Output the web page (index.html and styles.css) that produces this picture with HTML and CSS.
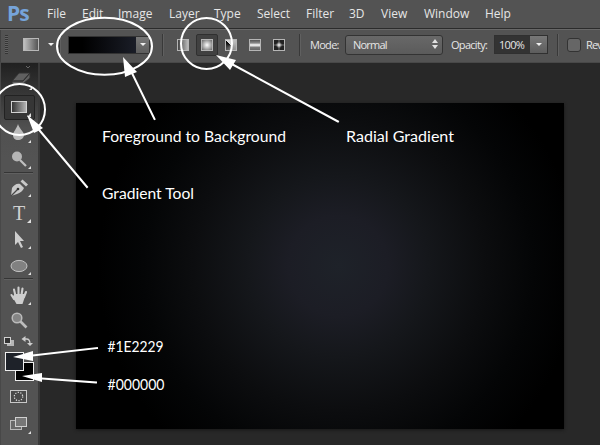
FILE: index.html
```html
<!DOCTYPE html>
<html lang="en">
<head>
<meta charset="utf-8">
<title>Gradient tool</title>
<link rel="stylesheet" href="styles.css">
</head>
<body>
<div class="app">
  <nav class="menubar">
    <span class="logo">Ps</span>
    <span class="m">File</span><span class="m">Edit</span><span class="m">Image</span><span class="m">Layer</span><span class="m">Type</span><span class="m">Select</span><span class="m">Filter</span><span class="m">3D</span><span class="m">View</span><span class="m">Window</span><span class="m">Help</span>
  </nav>
  <div class="options">
    <i class="grip"></i>
    <i class="preview"></i>
    <i class="caret preset-caret"></i>
    <i class="rule rule-a"></i>
    <div class="ramp"><i class="ramp-fill"></i><span class="drop"><i class="caret"></i></span></div>
    <i class="rule rule-b"></i>
    <div class="kinds">
      <span class="kind"><i class="g linear"></i></span>
      <span class="kind on"><i class="g radial"></i></span>
      <span class="kind"><i class="g angle"></i></span>
      <span class="kind"><i class="g reflected"></i></span>
      <span class="kind"><i class="g diamond"></i></span>
    </div>
    <i class="rule rule-c"></i>
    <span class="label mode">Mode:</span>
    <div class="select"><span>Normal</span><svg width="6" height="10" viewBox="0 0 6 10"><path d="M0 4 3 0 6 4ZM0 6 3 10 6 6Z" fill="#e2e2e2"/></svg></div>
    <span class="label opacity">Opacity:</span>
    <div class="number"><span>100%</span><span class="drop"><i class="caret"></i></span></div>
    <i class="rule rule-d"></i>
    <i class="check"></i>
    <span class="label reverse">Rev</span>
  </div>
  <div class="work">
    <aside class="tools">
      <div class="tool eraser"><svg width="37" height="29"><path d="M11 18 18 10h11l-7 8ZM11 18v4h10l8-7v-5l-7 8Z" fill="#606060" stroke="#303030"/><path d="M25 3l2 2 2-2" fill="none" stroke="#666"/><path class="corner" d="M31 24v3h-3Z"/></svg></div>
      <div class="tool active"><svg width="37" height="25"><defs><linearGradient id="tg"><stop stop-color="#303030"/><stop offset="1" stop-color="#b8b8b8"/></linearGradient></defs><rect x="10.5" y="6.5" width="15" height="11" fill="url(#tg)" stroke="#d2d2d2"/><path class="corner" d="M30 18v4h-4Z"/></svg></div>
      <div class="tool"><svg width="37" height="26"><path d="M17 4C16 8 12 12 12 15c0 3 2 5 5 5s6-2 6-5c0-3-5-7-6-11Z" fill="#bcbcbc"/><path class="corner" d="M30 20v3h-3Z"/></svg></div>
      <div class="tool"><svg width="37" height="26"><circle cx="16" cy="10.500" r="5" fill="#b5b5b5"/><path d="m19 14 6 6" stroke="#c0c0c0" stroke-width="2.200"/><path class="corner" d="M30 20v3h-3Z"/></svg></div>
      <hr>
      <div class="tool"><svg width="37" height="26"><path d="m10 22 1-8c2-3 5-5 8-4l4 4c-1 3-4 5-7 6ZM19.500 7.500l2-2 5.500 5-2 2Z" fill="#c9c9c9"/><path d="m10 22 7-7" stroke="#484848" stroke-width="1.200"/><circle cx="17" cy="15" r="1.300" fill="#333"/><path class="corner" d="M30 20v3h-3Z"/></svg></div>
      <div class="tool type">T<svg class="mark" width="4" height="4"><path class="corner" d="M4 0v4H0Z"/></svg></div>
      <div class="tool"><svg width="37" height="26"><path d="M14 5v14l3-3 3 6 2-1-3-6h4Z" fill="#cecece"/><path class="corner" d="M30 20v3h-3Z"/></svg></div>
      <div class="tool"><svg width="37" height="27"><ellipse cx="18" cy="14" rx="8" ry="5.600" fill="#818181" stroke="#c2c2c2"/><path class="corner" d="M30 20v3h-3Z"/></svg></div>
      <hr>
      <div class="tool"><svg width="37" height="26"><path d="m13 19-2.500-4M14.500 16 13 9.500M17.500 15V7.500M20.500 15l1-6.500M23 17l2-5" fill="none" stroke="#cecece" stroke-width="2.100" stroke-linecap="round"/><path d="M13.500 14h10v4l-2 6h-6L11.500 17Z" fill="#cecece"/><path class="corner" d="M30 22v3h-3Z"/></svg></div>
      <div class="tool"><svg width="37" height="26"><circle cx="16" cy="12" r="4.800" fill="#858585" stroke="#bababa" stroke-width="1.500"/><path d="m19.500 15.500 6 6" stroke="#bcbcbc" stroke-width="2.700"/></svg></div>
      <div class="tool mini"><svg width="37" height="17"><path d="M6 8h7v6H6Z" fill="#b5b5b5"/><rect x="3.500" y="5.500" width="6" height="6" fill="#333" stroke="#d0d0d0"/><path d="M24 7h1.500Q29 7 29 12" fill="none" stroke="#ccc" stroke-width="1.300"/><path d="m24.500 4-4 3 4 3ZM26 11h6l-3 3Z" fill="#ccc"/></svg></div>
      <div class="tool colors"><i class="bg"></i><i class="fg"></i></div>
      <div class="tool mask"><svg width="37" height="26"><rect x="9.500" y="7.500" width="16" height="12" fill="#494949" stroke="#c8c8c8"/><circle cx="17.500" cy="13.500" r="4.200" fill="none" stroke="#e0e0e0" stroke-width="1.200" stroke-dasharray="1.200 1.440"/></svg></div>
      <div class="tool screen"><svg width="37" height="28"><rect x="9.500" y="11.500" width="11" height="9" fill="#696969" stroke="#b9b9b9"/><rect x="14.500" y="8.500" width="11" height="9" fill="#777" stroke="#d0d0d0"/><path class="corner" d="M30 22v3h-3Z"/></svg></div>
    </aside>
    <main class="pasteboard"><div class="document"></div></main>
  </div>
  <svg class="notes" width="600" height="445" viewBox="0 0 600 445">
    <g fill="none" stroke="#fff" stroke-width="2">
      <ellipse cx="104.500" cy="46.300" rx="47.500" ry="28.500"/>
      <circle cx="206.500" cy="43.500" r="25.500"/>
      <circle cx="19.500" cy="109.500" r="25.500"/>
      <path d="M154.500 119 129 67M338 121.500 228 62M87 187 35 125M97 348 28 356M96 382.500 36 378" stroke-linecap="square"/>
    </g>
    <path d="m123 57 14 15-5 2-7 3ZM216 55 236 60 230 70ZM27 115 43 128 38 131 34 133ZM13 357 33 351 33 361ZM22 376 42 373 42 382Z" fill="#fff"/>
    <g class="captions">
      <text x="102" y="142" textLength="184" lengthAdjust="spacingAndGlyphs">Foreground to Background</text>
      <text x="346" y="142" textLength="108" lengthAdjust="spacingAndGlyphs">Radial Gradient</text>
      <text x="102" y="199" textLength="92" lengthAdjust="spacingAndGlyphs">Gradient Tool</text>
      <text x="107.500" y="352" textLength="56" lengthAdjust="spacingAndGlyphs">#1E2229</text>
      <text x="107.500" y="390" textLength="57" lengthAdjust="spacingAndGlyphs">#000000</text>
    </g>
  </svg>
</div>
</body>
</html>
```
FILE: styles.css
```css
* { box-sizing: border-box; }
body { margin: 0; background: #282828; overflow: hidden; }
i { display: block; flex: none; }
.app { position: relative; width: 600px; height: 445px; overflow: hidden; color: #e6e6e6; font-family: "Open Sans", "Noto Sans", sans-serif; }
.menubar { display: grid; grid-template-columns: 40px 35px 36px 51px 45px 43px 49px 43px 32px 43px 61px 40px; height: 28px; padding-left: 7px; background: #535353; font-size: 12px; line-height: 28px; white-space: nowrap; }
.logo { color: #76a4da; font: bold 21px/26px "Open Sans", sans-serif; letter-spacing: -1px; }
.options { display: flex; align-items: center; height: 35px; padding-bottom: 2px; border-top: 1px solid #2b2b2b; border-bottom: 1px solid #484848; box-shadow: inset 0 1px #686868, inset 1px 0 #424242; background: #535353; font-size: 11px; white-space: nowrap; overflow: hidden; }
.options > * { flex: none; }
.grip { width: 3px; height: 19px; margin-left: 5px; background: repeating-linear-gradient(#353535 0 1px, #626262 1px 2px); }
.preview { width: 16px; height: 13px; margin-left: 15px; border: 1px solid #b8b8b8; background: linear-gradient(90deg, #c0c0c0, #555); }
.caret { width: 0; height: 0; border: 3px solid transparent; border-top-color: #f0f0f0; border-bottom: 0; }
.preset-caret { margin-left: 9px; }
.rule { width: 2px; height: 22px; border-left: 1px solid #393939; border-right: 1px solid #606060; }
.rule-a { margin-left: 5px; }
.ramp { display: flex; width: 82px; height: 18px; margin-left: 7px; border: 1px solid #333; }
.ramp-fill { width: 67px; background: linear-gradient(90deg, #000 20%, #1a1d27); }
.drop { display: flex; align-items: center; justify-content: center; flex: 1; background: linear-gradient(#777, #5d5d5d); }
.rule-b { margin-left: 12px; }
.kinds { display: flex; margin-left: 8px; gap: 2px; }
.kind { display: grid; place-items: center; width: 22px; height: 22px; }
.kind.on { border: 1px solid #303030; border-radius: 2px; background: #414141; }
.g { width: 12px; height: 12px; border: 1px solid #b5b5b5; }
.linear { background: linear-gradient(90deg, #444, #bbb); }
.radial { background: radial-gradient(#fff, #666); }
.angle { background: conic-gradient(from -45deg, #ddd, #bbb 25%, #888 60%, #333 85%, #000 99%, #ddd); }
.reflected { background: linear-gradient(#555, #888 30%, #fff 50%, #777 75%, #666); }
.diamond { background: radial-gradient(circle, #fff, transparent 45%), linear-gradient(#222, #222) 0 0 / 4px 4px no-repeat, linear-gradient(#222, #222) 100% 0 / 4px 4px no-repeat, linear-gradient(#222, #222) 0 100% / 4px 4px no-repeat, linear-gradient(#222, #222) 100% 100% / 4px 4px no-repeat, #4a4a4a; }
.rule-c { margin-left: 9px; }
.label.mode { width: 35px; margin-left: 9px; letter-spacing: -.7px; }
.select { display: flex; align-items: center; justify-content: space-between; width: 98px; height: 20px; padding: 0 4px 1px 7px; border: 1px solid #333; border-radius: 3px; background: linear-gradient(#686868, #5b5b5b); letter-spacing: -.8px; }
.label.opacity { width: 43px; margin-left: 8px; letter-spacing: -.7px; }
.number { display: flex; width: 54px; height: 19px; border: 1px solid #303030; background: #333; letter-spacing: -.7px; line-height: 17px; }
.number > span:first-child { width: 35px; padding-left: 4px; }
.rule-d { margin-left: 9px; }
.check { width: 14px; height: 14px; margin-left: 8px; border: 1px solid #333; border-radius: 3px; background: #666; }
.label.reverse { margin-left: 5px; letter-spacing: -.8px; }
.mode, .select, .opacity, .number, .reverse { font-weight: 500; }
.work { display: flex; height: 382px; }
.tools { display: flex; flex-direction: column; width: 40px; border-left: 1px solid #484848; border-right: 2px solid #3a3a3a; background: linear-gradient(#202020, #505050 65px, #535353 95px); }
.tool { display: flex; position: relative; flex: none; width: 37px; height: 26px; }
.tool svg { flex: none; }
.tools hr { width: 29px; height: 2px; margin: 0 0 0 3px; border: 0; border-top: 1px solid #353535; border-bottom: 1px solid #606060; }
.corner { fill: #e0e0e0; }
.eraser { height: 32px; }
.active { width: 31px; height: 25px; margin-left: 3px; border: 1px solid #222; border-radius: 2px; background: #363636; overflow: hidden; }
.active svg { margin: -1px 0 0 -4px; }
.type { padding-left: 12px; color: #d0d0d0; font: 20px/26px "Liberation Serif", serif; }
.mark { position: absolute; left: 26px; top: 19px; }
.mini { height: 17px; }
.colors { height: 34px; }
.fg, .bg { position: absolute; width: 19px; height: 19px; border: 1px solid #eee; }
.fg { left: 4px; top: 3px; background: #1e2229; }
.bg { left: 14px; top: 13px; background: #000; }
.pasteboard { flex: 1; padding: 40px 36px 16px; background: #282828; }
.document { height: 326px; background: radial-gradient(circle at 262px 163px, #1e2229 0, #1c1d25 50px, #15171b 90px, #0c0d0f 145px, #040506 195px, #000 240px); box-shadow: 0 1px 3px #171717; }
.notes { position: absolute; inset: 0; pointer-events: none; }
.captions { fill: #fff; font: 14.500px Lato, sans-serif; }
```
